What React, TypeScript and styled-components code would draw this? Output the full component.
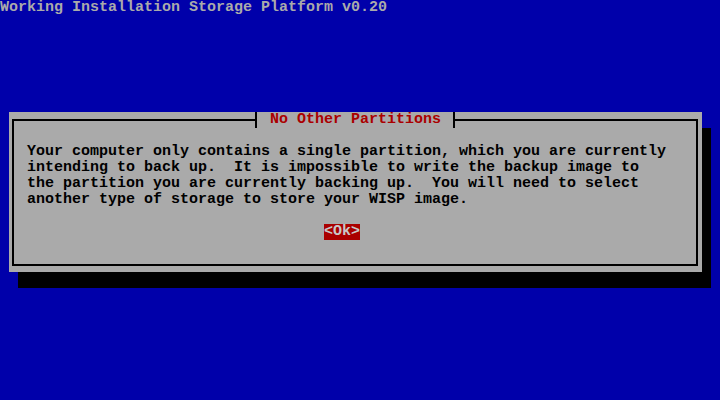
import styled, { createGlobalStyle } from "styled-components";

const GlobalStyle = createGlobalStyle`
  html, body {
    margin: 0;
    padding: 0;
    background: #0000aa;
  }
`;

const lines = [
  "Your computer only contains a single partition, which you are currently",
  "intending to back up.  It is impossible to write the backup image to",
  "the partition you are currently backing up.  You will need to select",
  "another type of storage to store your WISP image.",
];

export default function App() {
  return (
    <>
      <GlobalStyle />
      <Screen>
        <Header>Working Installation Storage Platform v0.20</Header>
        <Dialog>
          <Frame>
            <Title>No Other Partitions</Title>
            <Message>
              {lines.map((line) => (
                <Line key={line}>{line}</Line>
              ))}
            </Message>
            <ButtonRow>
              <OkButton>&lt;Ok&gt;</OkButton>
            </ButtonRow>
          </Frame>
        </Dialog>
      </Screen>
    </>
  );
}

const Screen = styled.div`
  display: flex;
  flex-direction: column;
  width: 720px;
  height: 400px;
  background: #0000aa;
  font-family: "Liberation Mono", "DejaVu Sans Mono", monospace;
  font-size: 15px;
  font-weight: bold;
  line-height: 16px;
  overflow: hidden;
`;
const Header = styled.div`
  height: 16px;
  color: #aaaaaa;
  white-space: pre;
`;
const Dialog = styled.div`
  display: flex;
  box-sizing: border-box;
  margin: 96px 0 0 9px;
  width: 693px;
  height: 160px;
  padding: 7px 4px 6px 3px;
  background: #aaaaaa;
  box-shadow: 9px 16px 0 #000000;
`;
const Frame = styled.div`
  position: relative;
  display: flex;
  flex-direction: column;
  flex: 1;
  box-sizing: border-box;
  border: 2px solid #000000;
  padding: 23px 0 0 13px;
`;
const Title = styled.div`
  position: absolute;
  top: -9px;
  left: 241px;
  height: 16px;
  padding: 0 12px 0 13px;
  border-left: 2px solid #000000;
  border-right: 2px solid #000000;
  background: #aaaaaa;
  color: #aa0000;
  white-space: pre;
`;
const Message = styled.div`
  display: flex;
  flex-direction: column;
  color: #000000;
`;
const Line = styled.div`
  height: 16px;
  white-space: pre;
`;
const ButtonRow = styled.div`
  display: flex;
  margin-top: 16px;
  padding-left: 297px;
`;
const OkButton = styled.div`
  height: 16px;
  background: #aa0000;
  color: #c8c8c8;
  white-space: pre;
`;
